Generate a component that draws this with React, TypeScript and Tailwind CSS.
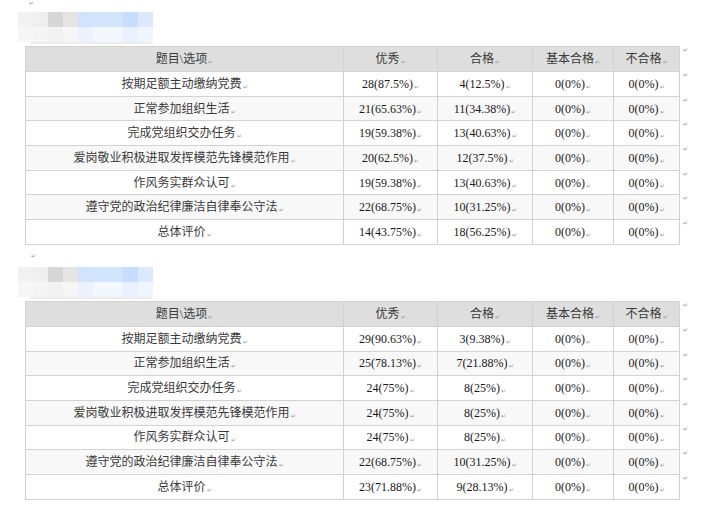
const header = ["题目\\选项", "优秀", "合格", "基本合格", "不合格"];

const labels = [
  "按期足额主动缴纳党费",
  "正常参加组织生活",
  "完成党组织交办任务",
  "爱岗敬业积极进取发挥模范先锋模范作用",
  "作风务实群众认可",
  "遵守党的政治纪律廉洁自律奉公守法",
  "总体评价",
];

const tables = [
  [
    ["28(87.5%)", "4(12.5%)"],
    ["21(65.63%)", "11(34.38%)"],
    ["19(59.38%)", "13(40.63%)"],
    ["20(62.5%)", "12(37.5%)"],
    ["19(59.38%)", "13(40.63%)"],
    ["22(68.75%)", "10(31.25%)"],
    ["14(43.75%)", "18(56.25%)"],
  ],
  [
    ["29(90.63%)", "3(9.38%)"],
    ["25(78.13%)", "7(21.88%)"],
    ["24(75%)", "8(25%)"],
    ["24(75%)", "8(25%)"],
    ["24(75%)", "8(25%)"],
    ["22(68.75%)", "10(31.25%)"],
    ["23(71.88%)", "9(28.13%)"],
  ],
];

const topBlocks = ["#f2f2f2", "#efefef", "#d7d7d7", "#e5e5e5", "#d1e3fd", "#d3e4fd", "#d3e4fd", "#c7ddfd", "#dfe9fd"];
const bottomBlocks = ["#f7f7f7", "#f5f5f5", "#f2f2f2", "#f6f6f6", "#ebf2fe", "#f3f7fe", "#f3f7fe", "#e9f1fe", "#f0f5fe"];

function Mark() {
  return <span className="ml-[1px] align-[-1px] text-[6px] leading-none text-[#999]">↵</span>;
}

function Blurred() {
  return (
    <div className="ml-[18px] flex flex-col">
      <div className="grid grid-cols-[repeat(9,15px)]">
        {topBlocks.map((c, i) => (
          <div key={"t" + i} className="h-[15px]" style={{ background: c }} />
        ))}
        {bottomBlocks.map((c, i) => (
          <div key={"b" + i} className="h-[15px]" style={{ background: c }} />
        ))}
      </div>
      <div className="ml-[12px] h-[2px] w-[123px] rounded-b bg-[#ececec]" />
    </div>
  );
}

function Survey({ rows }: { rows: string[][] }) {
  return (
    <div className="flex">
      <table className="ml-[25px] w-[655px] table-fixed border-collapse text-[12px] text-[#1a1a1a]">
        <colgroup>
          <col className="w-[318px]" />
          <col className="w-[94px]" />
          <col className="w-[95px]" />
          <col className="w-[81px]" />
          <col />
        </colgroup>
        <tbody>
          <tr className="h-[25px] bg-[#dedede] text-[#3a3a3a]">
            {header.map((h) => (
              <td key={h} className="border border-[#d2d2d2] p-0 text-center">
                {h}
                <Mark />
              </td>
            ))}
          </tr>
          {rows.map((r, i) => (
            <tr key={i} className={"h-[24.7px] " + (i % 2 === 1 ? "bg-[#f8f8f8]" : "bg-white")}>
              <td className="border border-[#d2d2d2] p-0 text-center text-[#3a3a3a]">
                {labels[i]}
                <Mark />
              </td>
              <td className="border border-[#d2d2d2] p-0 text-center">
                {r[0]}
                <Mark />
              </td>
              <td className="border border-[#d2d2d2] p-0 text-center">
                {r[1]}
                <Mark />
              </td>
              <td className="border border-[#d2d2d2] p-0 text-center">
                0(0%)
                <Mark />
              </td>
              <td className="border border-[#d2d2d2] p-0 text-center">
                0(0%)
                <Mark />
              </td>
            </tr>
          ))}
        </tbody>
      </table>
      <div className="ml-[3px] flex flex-col">
        <div className="h-[25px] pt-[1px] text-[6px] leading-none text-[#999]">↵</div>
        {rows.map((_, i) => (
          <div key={i} className="h-[24.7px] pt-[1px] text-[6px] leading-none text-[#999]">
            ↵
          </div>
        ))}
      </div>
    </div>
  );
}

export default function App() {
  return (
    <div className="h-[519px] w-[714px] overflow-hidden bg-white font-['Liberation_Serif','Noto_Sans_CJK_SC',serif]">
      <div className="ml-[29px] h-[12px] text-[6px] leading-none text-[#999]">↵</div>
      <Blurred />
      <div className="h-[2px]" />
      <Survey rows={tables[0]} />
      <div className="ml-[31px] mt-[8px] h-[14px] text-[6px] leading-none text-[#999]">↵</div>
      <Blurred />
      <div className="h-[2px]" />
      <Survey rows={tables[1]} />
    </div>
  );
}
